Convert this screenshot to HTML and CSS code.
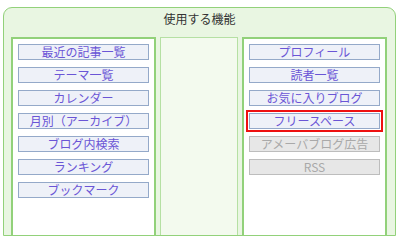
FILE: index.html
```html
<!DOCTYPE html>
<html lang="ja">
<head>
<meta charset="utf-8">
<link rel="stylesheet" href="styles.css">
</head>
<body>
<div class="panel">
  <div class="title">使用する機能</div>
  <div class="cols">
    <div class="col side">
      <div class="btn">最近の記事一覧</div>
      <div class="btn">テーマ一覧</div>
      <div class="btn">カレンダー</div>
      <div class="btn">月別（アーカイブ）</div>
      <div class="btn">ブログ内検索</div>
      <div class="btn">ランキング</div>
      <div class="btn">ブックマーク</div>
    </div>
    <div class="col middle"></div>
    <div class="col side">
      <div class="btn">プロフィール</div>
      <div class="btn">読者一覧</div>
      <div class="btn">お気に入りブログ</div>
      <div class="btn selected">フリースペース</div>
      <div class="btn disabled">アメーバブログ広告</div>
      <div class="btn disabled">RSS</div>
    </div>
  </div>
</div>
</body>
</html>
```
FILE: styles.css
```css
html, body {
  margin: 0;
  padding: 0;
  background: #ffffff;
}
body {
  font-family: "Noto Sans CJK JP", "Noto Sans", sans-serif;
  width: 400px;
  height: 242px;
  overflow: hidden;
}
.panel {
  margin: 7px 0 0 3px;
  width: 391px;
  height: 227px;
  border: 1px solid #92d17a;
  border-radius: 9px 9px 0 0;
  background: #e9f6e2;
  display: flex;
  flex-direction: column;
}
.title {
  height: 29px;
  line-height: 22px;
  text-align: center;
  font-size: 12px;
  color: #333333;
}
.cols {
  flex: 1;
  display: flex;
  gap: 4px;
  padding: 0 0 0 7px;
}
.col {
  box-sizing: border-box;
  height: 100%;
}
.side {
  width: 145px;
  background: #ffffff;
  border: 2px solid #92d17a;
  border-bottom: none;
  padding: 5px 0 0 5px;
  display: flex;
  flex-direction: column;
  gap: 7px;
}
.middle {
  width: 78px;
  background: #f3faee;
  border: 1px solid #b5e0a3;
  border-bottom: none;
}
.btn {
  box-sizing: border-box;
  width: 131px;
  height: 16px;
  border: 1px solid #94a9c9;
  background: #eef1f8;
  color: #6a55d6;
  font-size: 12px;
  line-height: 14px;
  text-align: center;
  white-space: nowrap;
}
.btn.selected {
  outline: 2px solid #ee1111;
  outline-offset: 1px;
}
.btn.disabled {
  border-color: #bdbdbd;
  background: #e7e7e7;
  color: #a9a9a9;
}
```
